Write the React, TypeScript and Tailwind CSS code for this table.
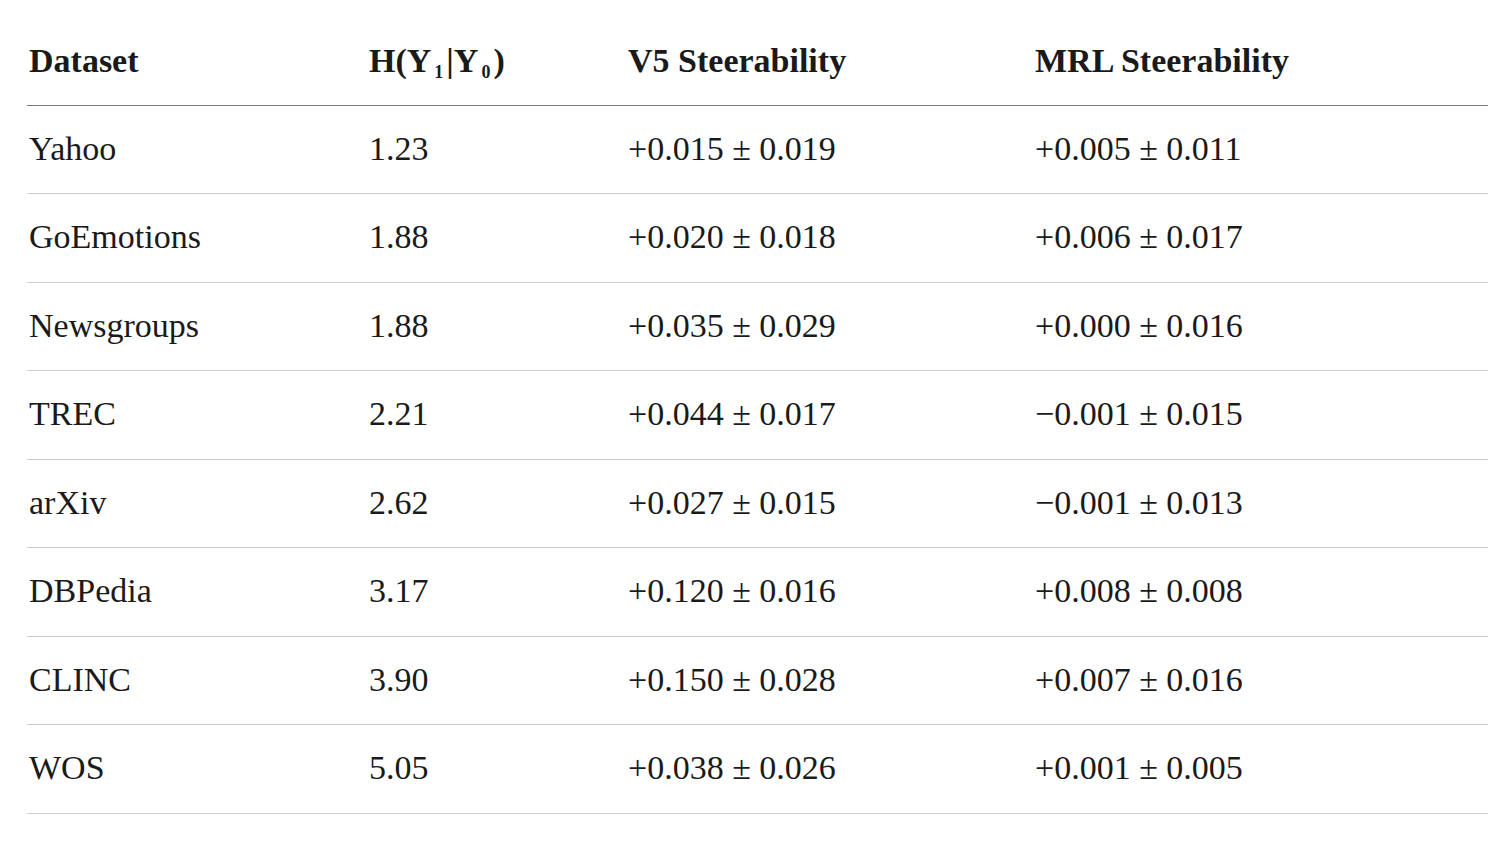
const rows = [
  { name: 'Yahoo', h: '1.23', v5: '+0.015 ± 0.019', mrl: '+0.005 ± 0.011' },
  { name: 'GoEmotions', h: '1.88', v5: '+0.020 ± 0.018', mrl: '+0.006 ± 0.017' },
  { name: 'Newsgroups', h: '1.88', v5: '+0.035 ± 0.029', mrl: '+0.000 ± 0.016' },
  { name: 'TREC', h: '2.21', v5: '+0.044 ± 0.017', mrl: '\u22120.001 ± 0.015' },
  { name: 'arXiv', h: '2.62', v5: '+0.027 ± 0.015', mrl: '\u22120.001 ± 0.013' },
  { name: 'DBPedia', h: '3.17', v5: '+0.120 ± 0.016', mrl: '+0.008 ± 0.008' },
  { name: 'CLINC', h: '3.90', v5: '+0.150 ± 0.028', mrl: '+0.007 ± 0.016' },
  { name: 'WOS', h: '5.05', v5: '+0.038 ± 0.026', mrl: '+0.001 ± 0.005' },
];

const cols = 'grid grid-cols-[340px_259px_407px_1fr] items-center pl-[2px]';

export default function App() {
  return (
    <div className="min-h-screen bg-white pt-[17px] px-[27px] text-[#1a1a1a] font-['Liberation_Serif',serif]">
      <div className="w-[1461px]">
        {/* header */}
        <div className={`${cols} h-[89px] border-b border-[#7a7a7a] text-[34px] font-bold pb-[2px]`}>
          <div>Dataset</div>
          <div>
            H(Y<sub className="text-[18px] relative top-[6px] px-[3px]">1</sub>|Y
            <sub className="text-[18px] relative top-[6px] px-[3px]">0</sub>)
          </div>
          <div>V5 Steerability</div>
          <div>MRL Steerability</div>
        </div>

        {rows.map((r, i) => (
          <div
            key={r.name}
            className={`${cols} border-b border-[#cccccc] text-[34px] pb-[3px] ${i % 2 === 0 ? 'h-[88px]' : 'h-[89px]'}`}
          >
            <div>{r.name}</div>
            <div>{r.h}</div>
            <div>{r.v5}</div>
            <div>{r.mrl}</div>
          </div>
        ))}
      </div>
    </div>
  );
}
